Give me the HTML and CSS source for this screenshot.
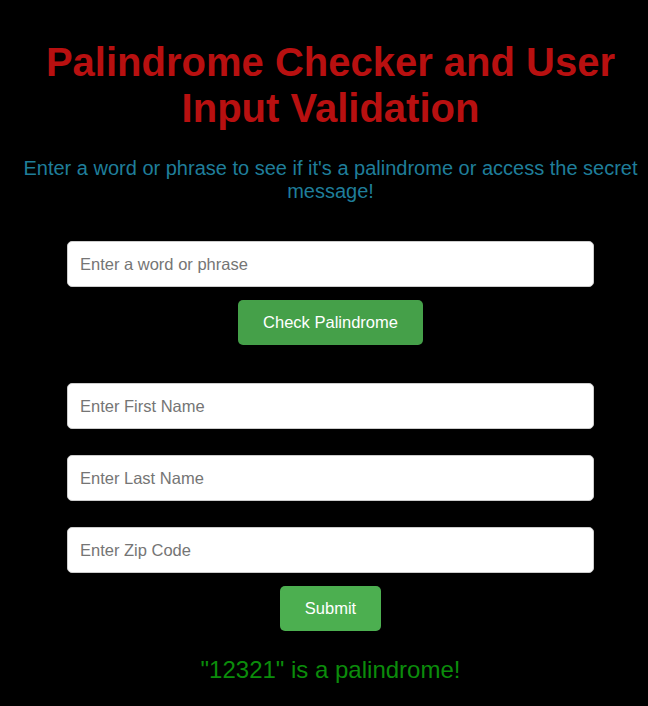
FILE: index.html
```html
<!DOCTYPE html>
<html lang="en">
<head>
<meta charset="utf-8">
<title>Palindrome Checker and User Input Validation</title>
<link rel="stylesheet" href="styles.css">
</head>
<body>
<div class="container">
  <h1 class="title">Palindrome Checker and User Input Validation</h1>
  <p class="subtitle">Enter a word or phrase to see if it's a palindrome or access the secret message!</p>
  <div class="form palindrome-form">
    <input class="field" type="text" placeholder="Enter a word or phrase">
    <button class="btn btn-check" type="button">Check Palindrome</button>
  </div>
  <div class="form user-form">
    <input class="field" type="text" placeholder="Enter First Name">
    <input class="field" type="text" placeholder="Enter Last Name">
    <input class="field last-field" type="text" placeholder="Enter Zip Code">
    <button class="btn btn-submit" type="button">Submit</button>
  </div>
  <p class="result">"12321" is a palindrome!</p>
</div>
</body>
</html>
```

FILE: styles.css
```css
html, body {
  margin: 0;
  padding: 0;
  background: #000;
}

body {
  font-family: "Liberation Sans", Arial, sans-serif;
}

.container {
  margin-left: 13px;
  width: 635px;
  padding-top: 12px;
  text-align: center;
}

.title {
  font-size: 40px;
  font-weight: bold;
  line-height: 46px;
  color: #b81010;
  margin: 27px 0 26px;
}

.subtitle {
  font-size: 20px;
  line-height: 23px;
  color: #1f7e9a;
  margin: 26px 0 38px;
}

.form {
  width: 527px;
  margin: 0 auto;
  display: flex;
  flex-direction: column;
  align-items: center;
}

.user-form {
  margin-top: 38px;
}

.field {
  box-sizing: border-box;
  width: 527px;
  height: 46px;
  padding: 0 12px;
  border: 1px solid #ccc;
  border-radius: 5px;
  background: #fff;
  font-family: "Liberation Sans", Arial, sans-serif;
  font-size: 16.5px;
  color: #333;
  margin-bottom: 26px;
}

.field::placeholder {
  color: #757575;
}

.palindrome-form .field,
.last-field {
  margin-bottom: 13px;
}

.btn {
  box-sizing: border-box;
  height: 45px;
  padding: 0 25px;
  border: none;
  border-radius: 5px;
  color: #fff;
  font-family: "Liberation Sans", Arial, sans-serif;
  font-size: 16.5px;
  cursor: pointer;
}

.btn-check {
  background: #45a049;
}

.btn-submit {
  background: #4caf50;
}

.result {
  font-size: 24px;
  color: #0b8c0b;
  margin: 25px 0 0;
}
```
